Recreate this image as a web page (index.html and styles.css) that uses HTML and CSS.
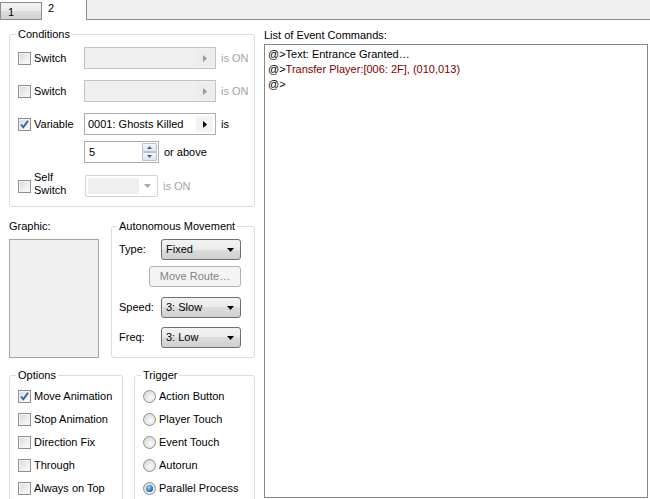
FILE: index.html
```html
<!DOCTYPE html>
<html lang="en">

<head>
    <meta charset="UTF-8">
    <meta name="viewport" content="width=device-width, initial-scale=1.0">
    <title>Event Page</title>
    <link rel="stylesheet" href="styles.css">
</head>

<body>
    <div class="tabs">
        <div class="tab">1</div>
        <div class="tab tab-active">2</div>
        <div class="tab-fill"></div>
    </div>

    <div class="page">
        <div class="left">
            <fieldset class="group conditions">
                <legend>Conditions</legend>
                <div class="cond-row row-a">
                    <label class="check"><span class="box"></span>Switch</label>
                    <div class="picker disabled">
                        <span class="picker-text"></span>
                        <span class="picker-btn"><svg width="4" height="7" viewBox="0 0 4 7"><path d="M0 0 L4 3.5 L0 7 Z" fill="#9a9a9a"/></svg></span>
                    </div>
                    <span class="after muted">is ON</span>
                </div>
                <div class="cond-row row-a">
                    <label class="check"><span class="box"></span>Switch</label>
                    <div class="picker disabled">
                        <span class="picker-text"></span>
                        <span class="picker-btn"><svg width="4" height="7" viewBox="0 0 4 7"><path d="M0 0 L4 3.5 L0 7 Z" fill="#9a9a9a"/></svg></span>
                    </div>
                    <span class="after muted">is ON</span>
                </div>
                <div class="cond-row row-b">
                    <label class="check"><span class="box"><svg width="11" height="11" viewBox="0 0 11 11"><path d="M2 5.5 L4.3 8.3 L9 1.8" fill="none" stroke="#3e5d9c" stroke-width="1.9"/></svg></span>Variable</label>
                    <div class="picker">
                        <span class="picker-text">0001: Ghosts Killed</span>
                        <span class="picker-btn"><svg width="4" height="7" viewBox="0 0 4 7"><path d="M0 0 L4 3.5 L0 7 Z" fill="#000"/></svg></span>
                    </div>
                    <span class="after">is</span>
                </div>
                <div class="cond-row row-c">
                    <div class="spin">
                        <span class="spin-text">5</span>
                        <span class="spin-btns">
                            <span class="spin-btn"><svg width="5" height="3" viewBox="0 0 5 3"><path d="M0 3 L2.5 0 L5 3 Z" fill="#4d6185"/></svg></span>
                            <span class="spin-btn"><svg width="5" height="3" viewBox="0 0 5 3"><path d="M0 0 L2.5 3 L5 0 Z" fill="#4d6185"/></svg></span>
                        </span>
                    </div>
                    <span class="after">or above</span>
                </div>
                <div class="cond-row">
                    <label class="check"><span class="box"></span><span class="two-line">Self<br>Switch</span></label>
                    <div class="combo-off">
                        <span class="combo-off-field"></span>
                        <span class="combo-off-arrow"><svg width="7" height="4" viewBox="0 0 7 4"><path d="M0 0 L7 0 L3.5 4 Z" fill="#a8a8a8"/></svg></span>
                    </div>
                    <span class="after muted">is ON</span>
                </div>
            </fieldset>

            <div class="mid">
                <div class="graphic-col">
                    <div class="graphic-label">Graphic:</div>
                    <div class="graphic-box"></div>
                </div>
                <fieldset class="group movement">
                    <legend>Autonomous Movement</legend>
                    <div class="mv-row">
                        <span class="mv-label">Type:</span>
                        <div class="combo"><span>Fixed</span><svg width="7" height="4" viewBox="0 0 7 4"><path d="M0 0 L7 0 L3.5 4 Z" fill="#000"/></svg></div>
                    </div>
                    <div class="route-btn">Move Route…</div>
                    <div class="mv-row speed">
                        <span class="mv-label">Speed:</span>
                        <div class="combo"><span>3: Slow</span><svg width="7" height="4" viewBox="0 0 7 4"><path d="M0 0 L7 0 L3.5 4 Z" fill="#000"/></svg></div>
                    </div>
                    <div class="mv-row freq">
                        <span class="mv-label">Freq:</span>
                        <div class="combo"><span>3: Low</span><svg width="7" height="4" viewBox="0 0 7 4"><path d="M0 0 L7 0 L3.5 4 Z" fill="#000"/></svg></div>
                    </div>
                </fieldset>
            </div>

            <div class="bottom">
                <fieldset class="group options">
                    <legend>Options</legend>
                    <label class="opt"><span class="box"><svg width="11" height="11" viewBox="0 0 11 11"><path d="M2 5.5 L4.3 8.3 L9 1.8" fill="none" stroke="#3e5d9c" stroke-width="1.9"/></svg></span>Move Animation</label>
                    <label class="opt"><span class="box"></span>Stop Animation</label>
                    <label class="opt"><span class="box"></span>Direction Fix</label>
                    <label class="opt"><span class="box"></span>Through</label>
                    <label class="opt"><span class="box"></span>Always on Top</label>
                </fieldset>
                <fieldset class="group trigger">
                    <legend>Trigger</legend>
                    <label class="opt"><span class="radio"></span>Action Button</label>
                    <label class="opt"><span class="radio"></span>Player Touch</label>
                    <label class="opt"><span class="radio"></span>Event Touch</label>
                    <label class="opt"><span class="radio"></span>Autorun</label>
                    <label class="opt"><span class="radio on"><span class="dot"></span></span>Parallel Process</label>
                </fieldset>
            </div>
        </div>

        <div class="right">
            <div class="list-label">List of Event Commands:</div>
            <div class="list">
                <div>@&gt;Text: Entrance Granted…</div>
                <div>@&gt;<span class="red">Transfer Player:[006: 2F], (010,013)</span></div>
                <div>@&gt;</div>
            </div>
        </div>
    </div>
</body>

</html>
```

FILE: styles.css
```css
* {
    box-sizing: border-box;
}

body {
    margin: 0;
    background: #fff;
    color: #000;
    font-family: "Liberation Sans", Arial, sans-serif;
    font-size: 11px;
    line-height: 13px;
}

/* tab strip */
.tabs {
    display: flex;
    align-items: flex-end;
    height: 20px;
}

.tab {
    width: 42px;
    height: 18px;
    padding: 3px 0 0 7px;
    border: 1px solid #898c95;
    background: linear-gradient(#f3f3f3, #ebebeb 50%, #dedede 50%, #d2d2d2);
}

.tab-active {
    width: 44px;
    height: 20px;
    padding: 2px 0 0 6px;
    border: none;
    background: #fff;
}

.tab-fill {
    flex: 1;
    height: 20px;
    background: #f0f0f0;
    border-left: 1px solid #898c95;
    border-bottom: 1px solid #898c95;
}

.page {
    display: flex;
    padding-left: 9px;
}

.left {
    width: 246px;
}

/* group boxes */
.group {
    margin: 0;
    min-width: 0;
    padding: 6px 8px 9px;
    border: 1px solid #d5dfe5;
    border-radius: 3px;
}

.group legend {
    margin-left: -2px;
    padding: 0 2px;
    line-height: 13px;
}

.conditions {
    margin-top: 8px;
}

.cond-row {
    display: flex;
    align-items: center;
    height: 22px;
    white-space: nowrap;
}

.row-a {
    margin-bottom: 11px;
}

.row-b {
    margin-bottom: 6px;
}

.row-c {
    margin-bottom: 12px;
    padding-left: 66px;
}

.check {
    display: flex;
    align-items: center;
    flex: none;
    width: 66px;
}

.two-line {
    line-height: 13px;
    margin-top: -4px;
}

.box {
    flex: none;
    width: 13px;
    height: 13px;
    margin-right: 3px;
    border: 1px solid #8e8f8f;
    background: linear-gradient(135deg, #d9d9d9, #f6f6f6 80%, #fff);
    box-shadow: inset 0 0 0 1px #f4f4f4;
    display: flex;
}

.picker {
    display: flex;
    flex: none;
    width: 132px;
    height: 22px;
    border: 1px solid #abadb3;
    background: #fff;
}

.picker.disabled {
    border-color: #c2c2c2;
    background: #efefef;
}

.picker-text {
    flex: 1;
    padding: 4px 0 0 3px;
}

.picker-btn {
    width: 17px;
    margin: 2px 2px 2px 0;
    display: flex;
    align-items: center;
    justify-content: center;
    background: #f3f3f3;
}

.disabled .picker-btn {
    background: #ececec;
}

.after {
    flex: none;
    margin-left: 5px;
}

.muted {
    color: #a3a3a3;
}

.spin {
    display: flex;
    flex: none;
    width: 75px;
    height: 22px;
    border: 1px solid #abadb3;
}

.spin-text {
    flex: 1;
    padding: 4px 0 0 4px;
}

.spin-btns {
    display: flex;
    flex-direction: column;
    width: 15px;
    margin: 1px 1px 1px 0;
}

.spin-btn {
    flex: 1;
    display: flex;
    align-items: center;
    justify-content: center;
    border: 1px solid #b9c3cf;
    border-radius: 1px;
    background: linear-gradient(#f4f7fb, #dfe6ef);
}

.combo-off {
    display: flex;
    flex: none;
    width: 73px;
    height: 22px;
    margin-left: 1px;
    padding: 2px;
    border: 1px solid #d3d3d3;
    border-radius: 2px;
}

.combo-off-field {
    width: 51px;
    background: #efefef;
}

.combo-off-arrow {
    flex: 1;
    display: flex;
    align-items: center;
    justify-content: center;
}

/* graphic + movement */
.mid {
    display: flex;
    margin-top: 13px;
}

.graphic-col {
    width: 90px;
}

.graphic-box {
    height: 119px;
    margin-top: 6px;
    border: 1px solid #a5a5a5;
    background: #f0f0f0;
}

.movement {
    width: 144px;
    margin-left: 12px;
    padding: 6px 13px 8px 7px;
}

.mv-row {
    display: flex;
    align-items: center;
    height: 21px;
}

.mv-label {
    width: 42px;
}

.combo {
    display: flex;
    align-items: center;
    justify-content: space-between;
    width: 80px;
    height: 21px;
    padding: 0 6px 0 4px;
    border: 1px solid #707070;
    border-radius: 3px;
    background: linear-gradient(#f2f2f2, #ebebeb 50%, #dddddd 50%, #cfcfcf);
}

.route-btn {
    width: 92px;
    height: 21px;
    margin: 6px 0 0 30px;
    padding-top: 3px;
    text-align: center;
    color: #838383;
    border: 1px solid #adb2b5;
    border-radius: 3px;
    background: #f4f4f4;
}

.speed {
    margin-top: 10px;
}

.freq {
    margin-top: 9px;
}

/* options + trigger */
.bottom {
    display: flex;
    margin-top: 11px;
}

.options {
    width: 114px;
    padding-top: 3px;
}

.trigger {
    width: 121px;
    margin-left: 11px;
    padding-top: 3px;
}

.opt {
    display: flex;
    align-items: center;
    height: 23px;
    white-space: nowrap;
}

.radio {
    flex: none;
    width: 13px;
    height: 13px;
    margin-right: 3px;
    border: 1px solid #8e8f8f;
    border-radius: 50%;
    background: radial-gradient(circle at 60% 60%, #fafafa, #e2e2e2 60%, #cdcdcd);
    display: flex;
    align-items: center;
    justify-content: center;
}

.dot {
    width: 7px;
    height: 7px;
    border-radius: 50%;
    background: radial-gradient(circle at 40% 35%, #a8dcf8, #2a78c6 55%, #133f80);
}

/* event command list */
.right {
    width: 384px;
    margin-left: 9px;
    padding-top: 9px;
}

.list {
    height: 454px;
    margin-top: 2px;
    padding: 2px 3px;
    border: 1px solid #828790;
    line-height: 15px;
}

.red {
    color: #800000;
}
```
